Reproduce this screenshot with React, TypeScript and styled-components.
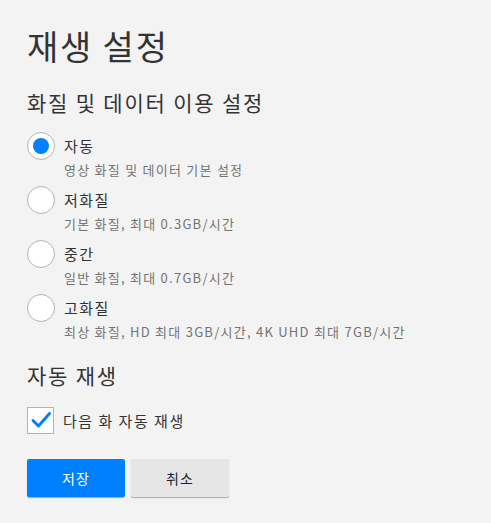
import React, { useState } from 'react'
import styled, { createGlobalStyle } from 'styled-components'

const GlobalStyle = createGlobalStyle`
  html, body {
    margin: 0;
    padding: 0;
    background: #f3f3f3;
  }
  body {
    font-family: "Noto Sans CJK KR", "Noto Sans", sans-serif;
    color: #333;
  }
`

const Page = styled.div`
  padding: 22px 27px 26px;
  min-height: 523px;
  box-sizing: border-box;
`

const Title = styled.h1`
  margin: 0;
  font-size: 34px;
  font-weight: 400;
  line-height: 48px;
  letter-spacing: 1.8px;
  color: #333;
`

const SectionTitle = styled.h2<{ $top: number }>`
  margin: ${({ $top }) => $top}px 0 0;
  font-size: 21px;
  font-weight: 400;
  line-height: 30px;
  letter-spacing: 1.8px;
  color: #333;
`

const OptionList = styled.div`
  display: flex;
  flex-direction: column;
  margin-top: 15px;
`

const Option = styled.label`
  display: flex;
  align-items: flex-start;
  gap: 9px;
  height: 54px;
  cursor: pointer;
`

const Radio = styled.span<{ $checked: boolean }>`
  flex: none;
  width: 26px;
  height: 26px;
  border-radius: 50%;
  border: 1px solid #b3b3b3;
  background: #fff;
  display: flex;
  align-items: center;
  justify-content: center;

  &::after {
    content: '';
    width: 16px;
    height: 16px;
    border-radius: 50%;
    background: #0080ff;
    display: ${({ $checked }) => ($checked ? 'block' : 'none')};
  }
`

const OptionText = styled.div`
  display: flex;
  flex-direction: column;
`

const OptionLabel = styled.span`
  font-size: 15px;
  line-height: 28px;
  letter-spacing: 1.4px;
  color: #333;
`

const OptionHint = styled.span`
  font-size: 13px;
  line-height: 20px;
  letter-spacing: 1.25px;
  color: #737373;
`

const CheckRow = styled.label`
  display: flex;
  align-items: center;
  gap: 9px;
  margin-top: 17px;
  cursor: pointer;
`

const CheckBox = styled.span`
  flex: none;
  width: 25px;
  height: 25px;
  border: 1px solid #b3b3b3;
  background: #fff;
  display: flex;
  align-items: center;
  justify-content: center;
`

const CheckLabel = styled.span`
  font-size: 15px;
  line-height: 26px;
  letter-spacing: 1.5px;
  color: #333;
`

const Buttons = styled.div`
  display: flex;
  gap: 6px;
  margin-top: 25px;
`

const Button = styled.button<{ $primary?: boolean }>`
  width: 98px;
  height: 38px;
  border: none;
  border-radius: 2px;
  font-family: inherit;
  font-size: 14px;
  letter-spacing: 1px;
  cursor: pointer;
  color: ${({ $primary }) => ($primary ? '#fff' : '#222')};
  background: ${({ $primary }) => ($primary ? '#0080ff' : '#e6e6e6')};
  box-shadow: 0 1px 1px rgba(0, 0, 0, 0.3);
`

const options = [
  { label: '자동', hint: '영상 화질 및 데이터 기본 설정' },
  { label: '저화질', hint: '기본 화질, 최대 0.3GB/시간' },
  { label: '중간', hint: '일반 화질, 최대 0.7GB/시간' },
  { label: '고화질', hint: '최상 화질, HD 최대 3GB/시간, 4K UHD 최대 7GB/시간' },
]

export default function App() {
  const [selected, setSelected] = useState(0)
  const [autoplay, setAutoplay] = useState(true)

  return (
    <Page>
      <GlobalStyle />
      <Title>재생 설정</Title>
      <SectionTitle $top={17}>화질 및 데이터 이용 설정</SectionTitle>
      <OptionList>
        {options.map((o, i) => (
          <Option key={o.label} onClick={() => setSelected(i)}>
            <Radio $checked={selected === i} />
            <OptionText>
              <OptionLabel>{o.label}</OptionLabel>
              <OptionHint>{o.hint}</OptionHint>
            </OptionText>
          </Option>
        ))}
      </OptionList>
      <SectionTitle $top={12}>자동 재생</SectionTitle>
      <CheckRow onClick={() => setAutoplay(!autoplay)}>
        <CheckBox>
          {autoplay && (
            <svg width="25" height="25" viewBox="0 0 25 25">
              <path d="M5 12.5 L10.5 18 L21.5 5.5" fill="none" stroke="#0080ff" strokeWidth="3" strokeLinecap="round" strokeLinejoin="round" />
            </svg>
          )}
        </CheckBox>
        <CheckLabel>다음 화 자동 재생</CheckLabel>
      </CheckRow>
      <Buttons>
        <Button $primary>저장</Button>
        <Button>취소</Button>
      </Buttons>
    </Page>
  )
}
